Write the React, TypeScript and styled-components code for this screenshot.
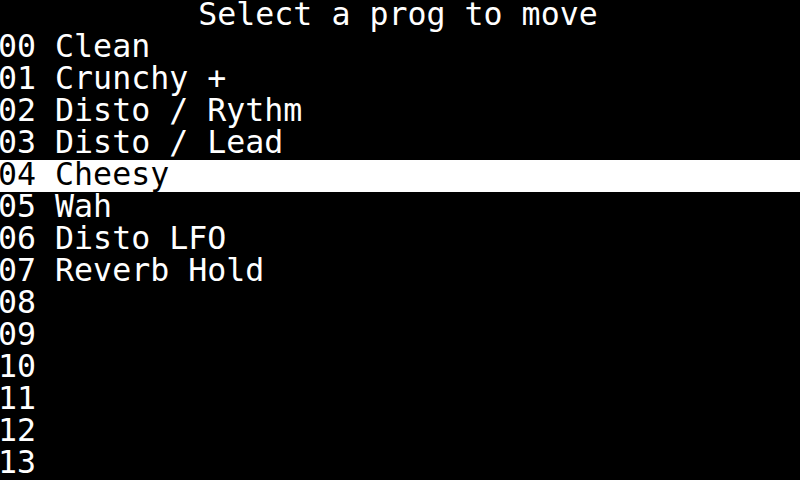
import React from "react";
import styled, { createGlobalStyle } from "styled-components";

const Global = createGlobalStyle`
  html, body { margin: 0; padding: 0; background: #000; }
  body { width: 800px; height: 480px; overflow: hidden; }
`;

const Screen = styled.div`
  width: 800px;
  height: 480px;
  background: #000;
  color: #fff;
  font-family: "DejaVu Sans Mono", monospace;
  font-size: 31.6px;
  display: flex;
  flex-direction: column;
  overflow: hidden;
`;

const Title = styled.div`
  height: 32px;
  line-height: 28px;
  text-align: center;
  white-space: pre;
  padding-right: 4px;
  overflow: visible;
`;

const Row = styled.div<{ $selected?: boolean }>`
  height: 32px;
  flex: 0 0 32px;
  line-height: 28px;
  white-space: pre;
  text-indent: -2px;
  background: ${(p) => (p.$selected ? "#fff" : "#000")};
  color: ${(p) => (p.$selected ? "#000" : "#fff")};
`;

const names = [
  "Clean",
  "Crunchy +",
  "Disto / Rythm",
  "Disto / Lead",
  "Cheesy",
  "Wah",
  "Disto LFO",
  "Reverb Hold",
  "",
  "",
  "",
  "",
  "",
  "",
];

export default function App() {
  return (
    <>
      <Global />
      <Screen>
        <Title>Select a prog to move</Title>
        {names.map((n, i) => (
          <Row key={i} $selected={i === 4}>
            {String(i).padStart(2, "0") + (n ? " " + n : "")}
          </Row>
        ))}
      </Screen>
    </>
  );
}
